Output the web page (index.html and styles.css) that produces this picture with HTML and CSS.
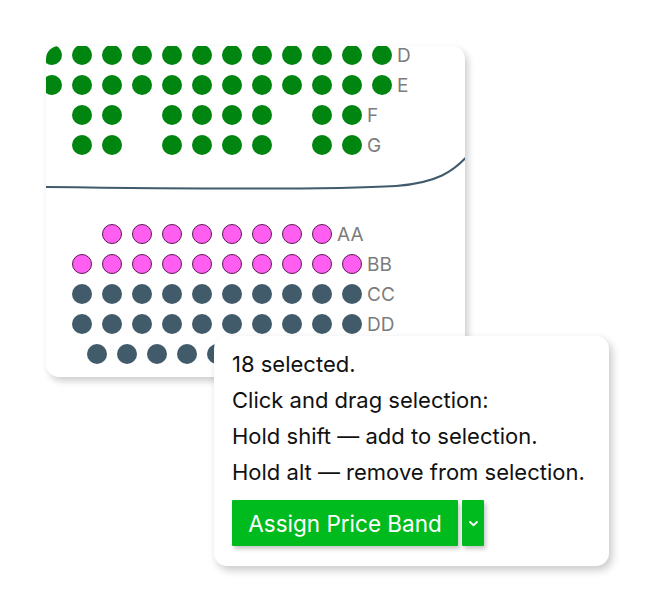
FILE: index.html
```html
<!DOCTYPE html>
<html lang="en">
<head>
    <meta charset="UTF-8">
    <meta name="viewport" content="width=device-width, initial-scale=1.0">
    <title>Seat Selection</title>
    <link rel="stylesheet" href="styles.css">
</head>
<body>
    <div class="stage">
        <div class="map">
            <div class="seats">
                <div class="row">
                    <span class="seat green"></span><span class="seat green"></span><span class="seat green"></span><span class="seat green"></span><span class="seat green"></span><span class="seat green"></span><span class="seat green"></span><span class="seat green"></span><span class="seat green"></span><span class="seat green"></span><span class="seat green"></span><span class="seat green"></span>
                    <span class="label">D</span>
                </div>
                <div class="row">
                    <span class="seat green"></span><span class="seat green"></span><span class="seat green"></span><span class="seat green"></span><span class="seat green"></span><span class="seat green"></span><span class="seat green"></span><span class="seat green"></span><span class="seat green"></span><span class="seat green"></span><span class="seat green"></span><span class="seat green"></span>
                    <span class="label">E</span>
                </div>
                <div class="row">
                    <span class="seat empty"></span><span class="seat green"></span><span class="seat green"></span><span class="seat empty"></span><span class="seat green"></span><span class="seat green"></span><span class="seat green"></span><span class="seat green"></span><span class="seat empty"></span><span class="seat green"></span><span class="seat green"></span>
                    <span class="label">F</span>
                </div>
                <div class="row">
                    <span class="seat empty"></span><span class="seat green"></span><span class="seat green"></span><span class="seat empty"></span><span class="seat green"></span><span class="seat green"></span><span class="seat green"></span><span class="seat green"></span><span class="seat empty"></span><span class="seat green"></span><span class="seat green"></span>
                    <span class="label">G</span>
                </div>
            </div>

            <svg class="stage-line" width="419" height="40" viewBox="0 0 419 40">
                <path d="M-2 27 C 150 29, 300 29, 350 26 C 390 23, 408 12, 424 -7" fill="none" stroke="#415b6c" stroke-width="2"/>
            </svg>

            <div class="seats lower">
                <div class="row">
                    <span class="seat empty"></span><span class="seat empty"></span><span class="seat pink"></span><span class="seat pink"></span><span class="seat pink"></span><span class="seat pink"></span><span class="seat pink"></span><span class="seat pink"></span><span class="seat pink"></span><span class="seat pink"></span>
                    <span class="label">AA</span>
                </div>
                <div class="row">
                    <span class="seat empty"></span><span class="seat pink"></span><span class="seat pink"></span><span class="seat pink"></span><span class="seat pink"></span><span class="seat pink"></span><span class="seat pink"></span><span class="seat pink"></span><span class="seat pink"></span><span class="seat pink"></span><span class="seat pink"></span>
                    <span class="label">BB</span>
                </div>
                <div class="row">
                    <span class="seat empty"></span><span class="seat slate"></span><span class="seat slate"></span><span class="seat slate"></span><span class="seat slate"></span><span class="seat slate"></span><span class="seat slate"></span><span class="seat slate"></span><span class="seat slate"></span><span class="seat slate"></span><span class="seat slate"></span>
                    <span class="label">CC</span>
                </div>
                <div class="row">
                    <span class="seat empty"></span><span class="seat slate"></span><span class="seat slate"></span><span class="seat slate"></span><span class="seat slate"></span><span class="seat slate"></span><span class="seat slate"></span><span class="seat slate"></span><span class="seat slate"></span><span class="seat slate"></span><span class="seat slate"></span>
                    <span class="label">DD</span>
                </div>
                <div class="row offset">
                    <span class="seat empty"></span><span class="seat slate"></span><span class="seat slate"></span><span class="seat slate"></span><span class="seat slate"></span><span class="seat slate"></span><span class="seat slate"></span><span class="seat slate"></span><span class="seat slate"></span><span class="seat slate"></span><span class="seat slate"></span>
                    <span class="label">EE</span>
                </div>
            </div>
        </div>

        <div class="popup">
            <p>18 selected.</p>
            <p>Click and drag selection:</p>
            <p>Hold shift — add to selection.</p>
            <p>Hold alt — remove from selection.</p>
            <div class="actions">
                <button class="assign">Assign Price Band</button>
                <button class="more" aria-label="More options">
                    <svg width="11" height="7" viewBox="0 0 11 7"><polyline points="1.5,1.5 5.5,5.2 9.5,1.5" fill="none" stroke="#fff" stroke-width="1.8"/></svg>
                </button>
            </div>
        </div>
    </div>
</body>
</html>
```

FILE: styles.css
```css
html, body {
    min-height: 100%;
}

body {
    margin: 0;
    min-height: 612px;
    background: #fff;
    font-family: Inter, "Noto Sans", sans-serif;
}

.stage {
    position: relative;
    width: 419px;
    padding: 46px 0 230px 46px;
}

.map {
    height: 331px;
    background: #fff;
    border-radius: 13px;
    overflow: hidden;
    box-shadow: 3px 4px 7px rgba(0, 0, 0, 0.2);
}

.seats {
    margin: -6px 0 0 -9px;
}

.seats.lower {
    margin-top: 19px;
}

.row {
    display: flex;
    align-items: center;
    height: 30px;
}

.row.offset {
    padding-left: 15px;
}

.seat {
    flex: none;
    width: 20px;
    height: 20px;
    margin: 5px;
    border-radius: 50%;
    box-sizing: border-box;
}

.seat.green {
    background: #008510;
}

.seat.pink {
    background: #ff5ef1;
    border: 1.5px solid #5a1a52;
}

.seat.slate {
    background: #425b6b;
}

.seat.empty {
    visibility: hidden;
}

.label {
    flex: none;
    font-size: 19px;
    line-height: 1;
    color: #7c7c7c;
}

.stage-line {
    display: block;
    overflow: visible;
}

/* selection popup */
.popup {
    position: absolute;
    left: 214px;
    top: 336px;
    width: 395px;
    height: 230px;
    box-sizing: border-box;
    padding: 10px 18px 20px;
    background: #fff;
    border-radius: 13px;
    box-shadow: 3px 4px 8px rgba(0, 0, 0, 0.22);
    color: #111;
}

.popup p {
    margin: 0;
    font-size: 22px;
    line-height: 36px;
}

.actions {
    display: flex;
    gap: 4px;
    margin-top: 10px;
}

.actions button {
    height: 46px;
    border: none;
    border-radius: 1px;
    background: #00bb1d;
    color: #fff;
    font-family: inherit;
    box-shadow: 2px 3px 4px rgba(0, 0, 0, 0.22);
    cursor: pointer;
}

.assign {
    width: 226px;
    font-size: 22.5px;
}

.more {
    width: 22px;
    padding: 0;
    display: flex;
    align-items: center;
    justify-content: center;
}
```
